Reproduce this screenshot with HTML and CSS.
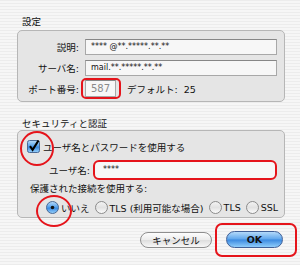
FILE: index.html
```html
<!DOCTYPE html>
<html lang="ja">
  <head>
    <meta charset="UTF-8" />
    <title>アカウント設定</title>
    <link rel="stylesheet" href="styles.css">
  </head>
  <body>
    <svg class="defs" width="0" height="0">
      <defs>
        <linearGradient id="aquaBlue" x1="0" y1="0" x2="0" y2="1">
          <stop offset="0" stop-color="#b9dcfa" />
          <stop offset="0.45" stop-color="#5aa4ec" />
          <stop offset="0.55" stop-color="#3a8ae2" />
          <stop offset="1" stop-color="#9ad4fc" />
        </linearGradient>
        <linearGradient id="aquaWhite" x1="0" y1="0" x2="0" y2="1">
          <stop offset="0" stop-color="#f4f4f4" />
          <stop offset="0.5" stop-color="#e2e2e2" />
          <stop offset="1" stop-color="#fdfdfd" />
        </linearGradient>
      </defs>
    </svg>

    <div class="dialog">
      <!-- 設定 -->
      <div class="group-title title-settings">設定</div>
      <div class="group group-settings">
        <div class="field-row">
          <span class="field-label">説明:</span>
          <div class="text-field">**** @**.*****.**.**</div>
        </div>
        <div class="field-row row-server">
          <span class="field-label">サーバ名:</span>
          <div class="text-field">mail.**.*****.**.**</div>
        </div>
        <div class="field-row row-port">
          <span class="field-label">ポート番号:</span>
          <div class="port-line">
            <div class="port-ring">
              <div class="text-field port-field">587</div>
            </div>
            <span class="default-port">デフォルト: <span class="default-value">25</span></span>
          </div>
        </div>
      </div>

      <!-- セキュリティと認証 -->
      <div class="group-title title-security">セキュリティと認証</div>
      <div class="group group-security">
        <div class="check-row">
          <span class="mark check-mark">
            <svg width="13" height="13" viewBox="0 0 13 13">
              <rect x="0.5" y="0.5" width="12" height="12" rx="2" fill="url(#aquaBlue)" stroke="#4a6a96" />
              <path d="M3 6.2 L5.6 9.8 L11.5 0.5" fill="none" stroke="#000" stroke-width="2.1" />
            </svg>
          </span>
          <span class="check-text">ユーザ名とパスワードを使用する</span>
        </div>
        <div class="user-row">
          <span class="field-label">ユーザ名:</span>
          <div class="user-ring">****</div>
        </div>
        <div class="secure-label">保護された接続を使用する:</div>
        <div class="radio-row">
          <span class="mark radio-mark">
            <svg width="13" height="13" viewBox="0 0 13 13">
              <circle cx="6.5" cy="6.5" r="6" fill="url(#aquaBlue)" stroke="#4a6a96" />
              <circle cx="6.5" cy="6.5" r="1.8" fill="#111" />
            </svg>
          </span>
          <span class="radio-text">いいえ</span>
          <span class="radio">
            <svg width="13" height="13" viewBox="0 0 13 13">
              <circle cx="6.5" cy="6.5" r="6" fill="url(#aquaWhite)" stroke="#8a8a8a" />
            </svg>
          </span>
          <span class="radio-text">TLS (利用可能な場合)</span>
          <span class="radio">
            <svg width="13" height="13" viewBox="0 0 13 13">
              <circle cx="6.5" cy="6.5" r="6" fill="url(#aquaWhite)" stroke="#8a8a8a" />
            </svg>
          </span>
          <span class="radio-text">TLS</span>
          <span class="radio">
            <svg width="13" height="13" viewBox="0 0 13 13">
              <circle cx="6.5" cy="6.5" r="6" fill="url(#aquaWhite)" stroke="#8a8a8a" />
            </svg>
          </span>
          <span class="radio-text">SSL</span>
        </div>
      </div>

      <div class="button-row">
        <button class="btn btn-cancel">キャンセル</button>
        <div class="ok-ring">
          <button class="btn btn-ok">OK</button>
        </div>
      </div>
    </div>
  </body>
</html>
```

FILE: styles.css
```css
* {
  box-sizing: border-box;
}
html,
body {
  margin: 0;
}
body {
  width: 300px;
  height: 265px;
  overflow: hidden;
  font-family: "DejaVu Sans", "Noto Sans CJK JP", sans-serif;
  font-size: 9.5px;
  color: #111;
  background: repeating-linear-gradient(
    to bottom,
    #ececec 0,
    #ececec 1.5px,
    #f6f6f6 1.5px,
    #f6f6f6 3px
  );
}
.defs {
  position: absolute;
}

.group-title {
  padding-left: 22px;
  line-height: 12px;
  height: 12px;
}
.title-settings {
  margin-top: 16px;
  margin-bottom: 2px;
}
.title-security {
  margin-top: 16px;
}
.group {
  margin: 0 15px 0 17px;
  border: 1px solid #b6b6b6;
  border-radius: 5px;
  background: #e5e5e5;
}
.group-settings {
  height: 72px;
  padding: 8px 7px 2px 0;
}
.group-security {
  height: 88px;
  padding: 9px 7px 3px 0;
}

/* 設定 rows */
.field-row {
  display: grid;
  grid-template-columns: 61px 1fr;
  column-gap: 6px;
  align-items: center;
}
.row-server {
  margin-top: 5px;
}
.row-port {
  margin-top: 2px;
}
.field-label {
  text-align: right;
  white-space: nowrap;
}
.text-field {
  height: 16px;
  padding: 0 5px;
  line-height: 14px;
  font-size: 8px;
  background: #f7f7f7;
  border: 1px solid #a8a8a8;
  border-top-color: #878787;
  white-space: nowrap;
  overflow: hidden;
}
.port-line {
  display: flex;
  align-items: center;
}
.port-ring {
  margin-left: -4px;
  height: 21px;
  padding: 0 3px 0 2px;
  display: flex;
  align-items: center;
  border: 2px solid #e5141b;
  border-radius: 5px;
}
.port-field {
  width: 31px;
  height: 17px;
  line-height: 15px;
  font-size: 10px;
  color: #8a8a8a;
  text-align: center;
}
.default-port {
  margin-left: 6px;
}
.default-value {
  margin-left: 3px;
}

/* セキュリティ rows */
.check-row {
  display: flex;
  align-items: center;
  height: 13px;
  padding-left: 9px;
}
.mark {
  position: relative;
  display: flex;
}
.mark::after {
  content: "";
  position: absolute;
  border: 2.5px solid #e5141b;
  border-radius: 50%;
}
.check-mark::after {
  left: -7px;
  top: -9px;
  width: 30px;
  height: 31px;
}
.radio-mark::after {
  left: -10px;
  top: -6px;
  width: 32px;
  height: 28px;
}
.check-text {
  margin-left: 3px;
}
.user-row {
  display: grid;
  grid-template-columns: 72px 1fr;
  column-gap: 3px;
  align-items: center;
  margin-top: 7px;
}
.user-ring {
  height: 20px;
  padding-left: 8px;
  line-height: 16px;
  font-size: 8px;
  background: #f7f7f7;
  border: 2px solid #e5141b;
  border-radius: 6px;
}
.secure-label {
  margin-top: 3px;
  padding-left: 12px;
  line-height: 12px;
}
.radio-row {
  display: flex;
  align-items: center;
  height: 13px;
  margin-top: 6px;
  padding-left: 28px;
}
.radio {
  display: flex;
  margin-left: 5px;
}
.radio-text {
  margin-left: 2px;
  white-space: nowrap;
}

/* buttons */
.button-row {
  display: flex;
  justify-content: flex-end;
  align-items: center;
  margin-top: 5px;
  padding-right: 3px;
}
.btn {
  font-family: inherit;
  font-size: 9.5px;
  padding: 0;
  color: #111;
}
.btn-cancel {
  width: 72px;
  height: 16px;
  margin-right: 3px;
  border: 1px solid #8e8e8e;
  border-radius: 8px;
  background: linear-gradient(#fdfdfd, #ececec 50%, #dedede 52%, #f7f7f7);
}
.ok-ring {
  width: 82px;
  height: 34px;
  padding: 6px 12px 7px 9px;
  border: 2px solid #e5141b;
  border-radius: 7px;
}
.btn-ok {
  width: 57px;
  height: 17px;
  font-weight: bold;
  border: 1px solid #3f5f97;
  border-radius: 9px;
  background: linear-gradient(#b4dafa, #5ea6ec 48%, #3a89e0 52%, #8fcdfb);
}
```
